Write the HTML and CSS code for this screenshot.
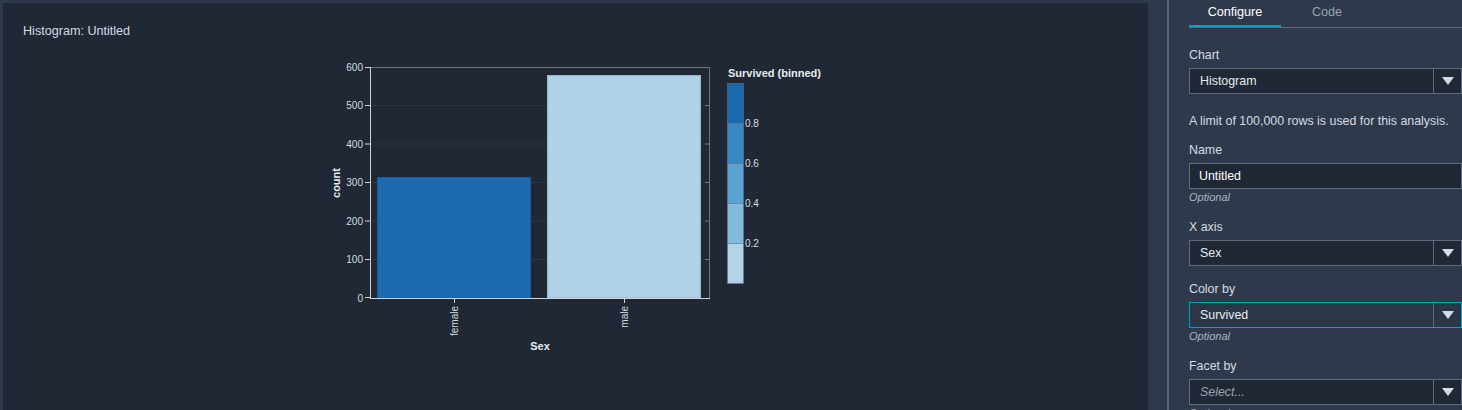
FILE: index.html
```html
<!DOCTYPE html>
<html lang="en">
<head>
    <meta charset="UTF-8">
    <title>Histogram: Untitled</title>
    <link rel="stylesheet" href="styles.css">
</head>
<body>

    <div class="layout">

        <div class="chart-panel">
            <div class="chart-title">Histogram: Untitled</div>

            <svg class="chart" width="540" height="310" viewBox="0 0 540 310">
                <g transform="translate(60,17)">
                    <!-- grid -->
                    <g stroke="#2c3542" stroke-width="1">
                        <line x1="0" y1="192.5" x2="339" y2="192.5"/>
                        <line x1="0" y1="154" x2="339" y2="154"/>
                        <line x1="0" y1="115.5" x2="339" y2="115.5"/>
                        <line x1="0" y1="77" x2="339" y2="77"/>
                        <line x1="0" y1="38.5" x2="339" y2="38.5"/>
                    </g>
                    <line x1="0" y1="0.5" x2="339" y2="0.5" stroke="#6a7380"/>
                    <line x1="339.5" y1="0" x2="339.5" y2="231" stroke="#6a7380"/>
                    <g stroke="#6a7380">
                        <line x1="335" y1="38.5" x2="339" y2="38.5"/>
                        <line x1="335" y1="77" x2="339" y2="77"/>
                        <line x1="335" y1="115.5" x2="339" y2="115.5"/>
                        <line x1="335" y1="154" x2="339" y2="154"/>
                        <line x1="335" y1="192.5" x2="339" y2="192.5"/>
                    </g>

                    <!-- bars -->
                    <rect x="7.5" y="110.5" width="153" height="120.5" fill="#1c69ad" stroke="#185d99"/>
                    <rect x="177.5" y="8.5" width="153" height="222.5" fill="#b0d2e8" stroke="#9ab9cf"/>

                    <!-- y axis -->
                    <line x1="0.5" y1="0" x2="0.5" y2="231" stroke="#d0d4da"/>
                    <g stroke="#d0d4da">
                        <line x1="-5" y1="0.5" x2="0" y2="0.5"/>
                        <line x1="-5" y1="38.5" x2="0" y2="38.5"/>
                        <line x1="-5" y1="77" x2="0" y2="77"/>
                        <line x1="-5" y1="115.5" x2="0" y2="115.5"/>
                        <line x1="-5" y1="154" x2="0" y2="154"/>
                        <line x1="-5" y1="192.5" x2="0" y2="192.5"/>
                        <line x1="-5" y1="230.5" x2="0" y2="230.5"/>
                    </g>
                    <g class="tick-label" text-anchor="end">
                        <text x="-7" y="3.5">600</text>
                        <text x="-7" y="42">500</text>
                        <text x="-7" y="80.5">400</text>
                        <text x="-7" y="119">300</text>
                        <text x="-7" y="157.5">200</text>
                        <text x="-7" y="196">100</text>
                        <text x="-7" y="234.5">0</text>
                    </g>
                    <text class="axis-title" transform="translate(-30,116) rotate(-90)" text-anchor="middle">count</text>

                    <!-- x axis -->
                    <line x1="0" y1="231.5" x2="340" y2="231.5" stroke="#d0d4da"/>
                    <g stroke="#d0d4da">
                        <line x1="84.5" y1="231" x2="84.5" y2="236"/>
                        <line x1="254.5" y1="231" x2="254.5" y2="236"/>
                    </g>
                    <g class="tick-label" text-anchor="end">
                        <text transform="translate(88,239) rotate(-90)">female</text>
                        <text transform="translate(258,239) rotate(-90)">male</text>
                    </g>
                    <text class="axis-title" x="170" y="283" text-anchor="middle">Sex</text>

                    <!-- legend -->
                    <text class="axis-title" x="358" y="10">Survived (binned)</text>
                    <rect x="357.5" y="16.5" width="16" height="40" fill="#1b69ad" stroke="#6a7a8c" stroke-width="0.5"/>
                    <rect x="357.5" y="56.5" width="16" height="40" fill="#3888c3" stroke="#6a7a8c" stroke-width="0.5"/>
                    <rect x="357.5" y="96.5" width="16" height="40" fill="#5aa2cf" stroke="#6a7a8c" stroke-width="0.5"/>
                    <rect x="357.5" y="136.5" width="16" height="40" fill="#83bbdb" stroke="#6a7a8c" stroke-width="0.5"/>
                    <rect x="357.5" y="176.5" width="16" height="40" fill="#b3d3e8" stroke="#6a7a8c" stroke-width="0.5"/>
                    <g class="tick-label">
                        <text x="375" y="59.5">0.8</text>
                        <text x="375" y="99.5">0.6</text>
                        <text x="375" y="139.5">0.4</text>
                        <text x="375" y="179.5">0.2</text>
                    </g>
                </g>
            </svg>
        </div>

        <div class="divider"></div>

        <div class="side-panel">
            <div class="tabs">
                <div class="tab active">Configure</div>
                <div class="tab">Code</div>
            </div>

            <div class="field">
                <label>Chart</label>
                <div class="select">
                    <span class="value">Histogram</span>
                    <span class="arrow"><svg width="12" height="8" viewBox="0 0 12 8"><path d="M0 0h12L6 8z" fill="#d5dbe3"/></svg></span>
                </div>
            </div>

            <p class="note">A limit of 100,000 rows is used for this analysis.</p>

            <div class="field">
                <label>Name</label>
                <div class="input">Untitled</div>
                <div class="hint">Optional</div>
            </div>

            <div class="field">
                <label>X axis</label>
                <div class="select">
                    <span class="value">Sex</span>
                    <span class="arrow"><svg width="12" height="8" viewBox="0 0 12 8"><path d="M0 0h12L6 8z" fill="#d5dbe3"/></svg></span>
                </div>
            </div>

            <div class="field">
                <label>Color by</label>
                <div class="select focused">
                    <span class="value">Survived</span>
                    <span class="arrow"><svg width="12" height="8" viewBox="0 0 12 8"><path d="M0 0h12L6 8z" fill="#d5dbe3"/></svg></span>
                </div>
                <div class="hint">Optional</div>
            </div>

            <div class="field">
                <label>Facet by</label>
                <div class="select">
                    <span class="value placeholder">Select...</span>
                    <span class="arrow"><svg width="12" height="8" viewBox="0 0 12 8"><path d="M0 0h12L6 8z" fill="#d5dbe3"/></svg></span>
                </div>
                <div class="hint">Optional</div>
            </div>
        </div>

    </div>

</body>
</html>
```

FILE: styles.css
```css
body {
    margin: 0;
    background-color: #2e3a4b;
    font-family: "Liberation Sans", Arial, sans-serif;
    color: #d5dbe3;
    height: 410px;
    overflow: hidden;
}

.layout {
    display: flex;
    height: 410px;
}

.chart-panel {
    width: 1125px;
    margin: 3px 0 0 3px;
    padding: 20px 0 0 20px;
    background-color: #1f2834;
    flex-shrink: 0;
}

.chart-title {
    font-size: 12.6px;
    line-height: 16px;
    color: #d5dbe3;
}

.chart {
    display: block;
    margin: 11px 0 0 287px;
}

.chart text {
    font-family: "Liberation Sans", Arial, sans-serif;
}

.tick-label {
    font-size: 10px;
    fill: #d8dce2;
}

.axis-title {
    font-size: 11px;
    font-weight: bold;
    fill: #e8ebef;
}

.divider {
    width: 2px;
    margin-left: 19px;
    background-color: #5d6673;
    flex-shrink: 0;
}

.side-panel {
    flex: 1;
    padding-left: 20px;
    font-size: 12.4px;
}

.tabs {
    display: flex;
    height: 27px;
    border-bottom: 1px solid #5f6b7a;
}

.tab {
    width: 92px;
    text-align: center;
    line-height: 25px;
    color: #9aa3ad;
    font-size: 12.6px;
}

.tab.active {
    color: #ffffff;
    border-bottom: 2px solid #00a1c9;
}

.field {
    margin-top: 16px;
}

.tabs + .field {
    margin-top: 20px;
}

.note + .field {
    margin-top: 14px;
}

.field label {
    display: block;
    line-height: 15px;
    margin-bottom: 5px;
    color: #d5dbe3;
}

.select,
.input {
    display: flex;
    height: 24px;
    border: 1px solid #5f6b7a;
    background-color: #1f2834;
    box-sizing: content-box;
}

.select.focused {
    border-color: #00a1c9;
    background-color: #2b3747;
}

.select .value {
    flex: 1;
    padding-left: 10px;
    line-height: 24px;
    color: #e8ebef;
}

.select .placeholder {
    font-style: italic;
    color: #9aa3ad;
}

.select .arrow {
    width: 27px;
    border-left: 1px solid #5f6b7a;
    display: flex;
    align-items: center;
    justify-content: center;
}

.input {
    padding-left: 9px;
    line-height: 24px;
    color: #ffffff;
}

.hint {
    font-size: 11px;
    font-style: italic;
    color: #aab4c0;
    line-height: 14px;
    margin: 1px 0 2px;
}

.note {
    margin: 19px 0 0;
    line-height: 16px;
}
```
